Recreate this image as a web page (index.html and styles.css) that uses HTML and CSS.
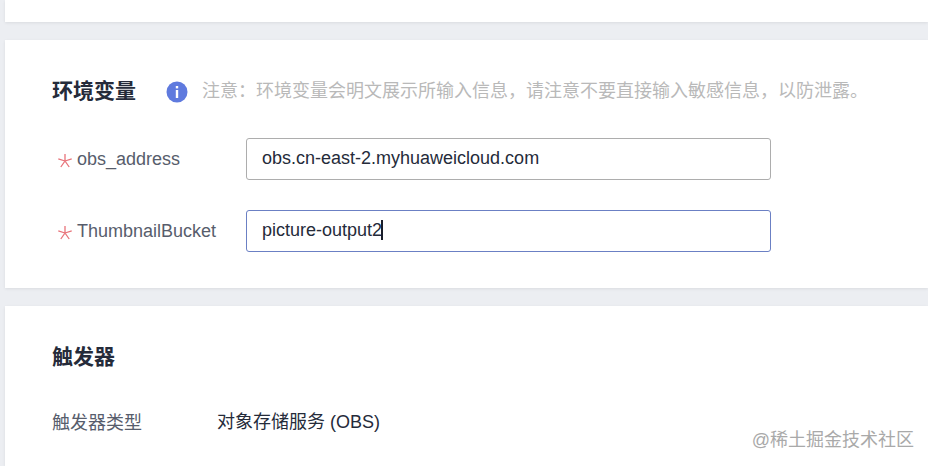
FILE: index.html
```html
<!DOCTYPE html>
<html lang="zh-CN">
<head>
    <meta charset="utf-8">
    <title>函数配置</title>
    <link rel="stylesheet" href="styles.css">
</head>
<body>
<div class="card card-top"></div>

<div class="card card-env">
    <div class="section-head">
        <h2>环境变量</h2>
        <svg class="info-icon" viewBox="0 0 22 22" width="22" height="22">
            <circle cx="11" cy="11" r="10.5" fill="#5f7ade"/>
            <rect x="9.8" y="5" width="2.4" height="2.4" fill="#fff"/>
            <rect x="9.8" y="9" width="2.4" height="8" fill="#fff"/>
        </svg>
        <span class="note">注意：环境变量会明文展示所输入信息，请注意不要直接输入敏感信息，以防泄露。</span>
    </div>

    <div class="form-row">
        <label class="form-label">
            <svg class="star" viewBox="0 0 14 14" width="14" height="14"><path d="M7 0V7M7 7L.3 4.8M7 7L13.7 4.8M7 7L2.8 13M7 7L11.2 13" stroke="#e8737a" stroke-width="1.3" fill="none"/></svg>
            obs_address
        </label>
        <div class="text-input">obs.cn-east-2.myhuaweicloud.com</div>
    </div>
    <div class="form-row">
        <label class="form-label">
            <svg class="star" viewBox="0 0 14 14" width="14" height="14"><path d="M7 0V7M7 7L.3 4.8M7 7L13.7 4.8M7 7L2.8 13M7 7L11.2 13" stroke="#e8737a" stroke-width="1.3" fill="none"/></svg>
            ThumbnailBucket
        </label>
        <div class="text-input focused">picture-output2<span class="caret"></span></div>
    </div>
</div>

<div class="card card-trigger">
    <h2>触发器</h2>
    <div class="info-row">
        <span class="info-label">触发器类型</span>
        <span class="info-value">对象存储服务 (OBS)</span>
    </div>
</div>

<div class="watermark">@稀土掘金技术社区</div>
</body>
</html>
```

FILE: styles.css
```css
html, body {
    height: 100%;
}

body {
    margin: 0;
    padding-left: 5px;
    background-color: #eceef2;
    font-family: "Liberation Sans", "Noto Sans CJK SC", sans-serif;
    overflow: hidden;
    position: relative;
}

h2 {
    margin: 0;
    font-size: 21px;
    line-height: 30px;
    font-weight: 700;
    color: #252b3a;
}

.card {
    background-color: #fff;
    margin-bottom: 18px;
    box-shadow: 0 1px 3px rgba(0,0,0,0.08);
}

.card-top {
    height: 22px;
}

.card-env {
    height: 248px;
    box-sizing: border-box;
    padding: 36px 0 0 47px;
}

.section-head {
    display: flex;
    align-items: center;
    height: 30px;
    margin-bottom: 32px;
}

.info-icon {
    margin-left: 30px;
    margin-top: 1px;
    flex-shrink: 0;
}

.note {
    margin-left: 14px;
    margin-top: -5px;
    font-size: 18px;
    color: #b9b9b9;
    white-space: nowrap;
}

.form-row {
    display: flex;
    align-items: center;
    margin-bottom: 30px;
}

.form-label {
    display: flex;
    align-items: center;
    gap: 5px;
    width: 194px;
    font-size: 18px;
    color: #575d6c;
    white-space: nowrap;
    padding-left: 6px;
    box-sizing: border-box;
}

.star {
    margin-top: 3px;
    flex-shrink: 0;
}

.text-input {
    display: flex;
    align-items: center;
    width: 525px;
    height: 42px;
    box-sizing: border-box;
    padding: 0 15px 2px;
    border: 1px solid #adadad;
    border-radius: 3px;
    font-size: 18px;
    color: #252b3a;
}

.text-input.focused {
    border-color: #6b80c4;
}

.caret {
    width: 2px;
    height: 20px;
    margin-left: -1px;
    background-color: #1a1e2a;
}

.card-trigger {
    margin-bottom: 0;
    height: 160px;
    padding: 36px 0 0 47px;
    box-sizing: border-box;
}

.info-row {
    display: flex;
    margin-top: 38px;
    font-size: 18px;
    line-height: 26px;
}

.info-label {
    width: 165px;
    color: #575d6c;
}

.info-value {
    margin-top: -1px;
    color: #252b3a;
}

.watermark {
    position: absolute;
    right: 14px;
    bottom: 14px;
    font-size: 18px;
    line-height: 24px;
    color: #a9a9a9;
}
```
